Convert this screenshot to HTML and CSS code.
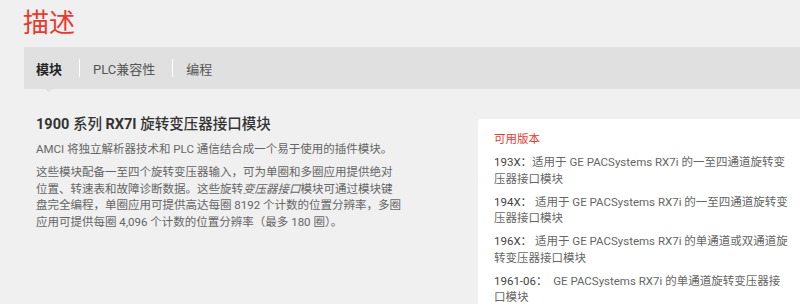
FILE: index.html
```html
<!DOCTYPE html>
<html>
  <head>
    <meta charset="UTF-8" />
    <meta name="viewport" content="width=device-width, initial-scale=1.0" />
    <title>描述</title>
    <link rel="stylesheet" href="styles.css">
  </head>
  <body>
    <div class="page">
      <h1 class="title">描述</h1>

      <!-- 标签栏 -->
      <nav class="tabs">
        <a class="tab active">模块</a>
        <span class="sep"></span>
        <a class="tab">PLC兼容性</a>
        <span class="sep"></span>
        <a class="tab">编程</a>
      </nav>

      <div class="body">
        <section class="intro">
          <h2><b>1900</b> 系列 <b>RX7I</b> 旋转变压器接口模块</h2>
          <p>AMCI 将独立解析器技术和 PLC 通信结合成一个易于使用的插件模块。</p>
          <p>这些模块配备一至四个旋转变压器输入，可为单圈和多圈应用提供绝对位置、转速表和故障诊断数据。这些旋转<em>变压器接口</em>模块可通过模块键盘完全编程，单圈应用可提供高达每圈 8192 个计数的位置分辨率，多圈应用可提供每圈 4,096 个计数的位置分辨率（最多 180 圈）。</p>
        </section>

        <aside class="versions">
          <h3>可用版本</h3>
          <p><span class="code">193X：</span>适用于 GE PACSystems RX7i 的一至四通道旋转变压器接口模块</p>
          <p><span class="code">194X：</span> 适用于 GE PACSystems RX7i 的一至四通道旋转变压器接口模块</p>
          <p><span class="code">196X：</span> 适用于 GE PACSystems RX7i 的单通道或双通道旋转变压器接口模块</p>
          <p><span class="code">1961-06：</span> &nbsp;GE PACSystems RX7i 的单通道旋转变压器接口模块</p>
        </aside>
      </div>
    </div>
  </body>
</html>
```

FILE: styles.css
```css
html,
body {
  margin: 0;
  background: #f0f0f0;
  overflow: hidden;
}
body {
  font-family: Roboto, "Noto Sans CJK SC", sans-serif;
  color: #666;
}
.page {
  padding: 8px 0 0 24px;
}
.title {
  margin: 0 0 9px -1px;
  font-size: 26px;
  line-height: 30px;
  font-weight: 400;
  color: #e8392f;
}
.tabs {
  display: flex;
  align-items: center;
  height: 42px;
  padding-left: 12px;
  background: #e0e0e0;
}
.tab {
  position: relative;
  font-size: 13px;
  color: #555;
}
.tab.active {
  font-weight: 700;
  color: #222;
}
/* 当前标签下方的小三角 */
.tab.active::after {
  content: "";
  position: absolute;
  left: 50%;
  top: 28px;
  margin-left: -6px;
  border: 6px solid transparent;
  border-top: 5px solid #e0e0e0;
  border-bottom: 0;
}
.sep {
  width: 1px;
  height: 18px;
  margin: 0 13px 0 17px;
  background: #fff;
}
.body {
  display: grid;
  grid-template-columns: 374px 1fr;
  column-gap: 80px;
  align-items: start;
}
.intro {
  padding: 26px 0 0 12px;
  width: 367px;
  font-size: 11.5px;
  line-height: 16.5px;
}
.intro h2 {
  margin: 0 0 6px;
  font-size: 14.5px;
  line-height: 20px;
  font-weight: 500;
  color: #333;
}
.intro h2 b {
  font-weight: 700;
}
.intro p {
  margin: 0 0 6.5px;
}
.versions {
  margin-top: 30px;
  padding: 12px 10px 10px 16px;
  background: #fff;
  border-radius: 3px 0 0 0;
  font-size: 11.5px;
  line-height: 16.5px;
}
.versions h3 {
  margin: 0 0 6.5px;
  font-size: 11.5px;
  font-weight: 400;
  color: #e8392f;
}
.versions p {
  margin: 0 0 6.5px;
}
.versions .code {
  color: #444;
}
```
